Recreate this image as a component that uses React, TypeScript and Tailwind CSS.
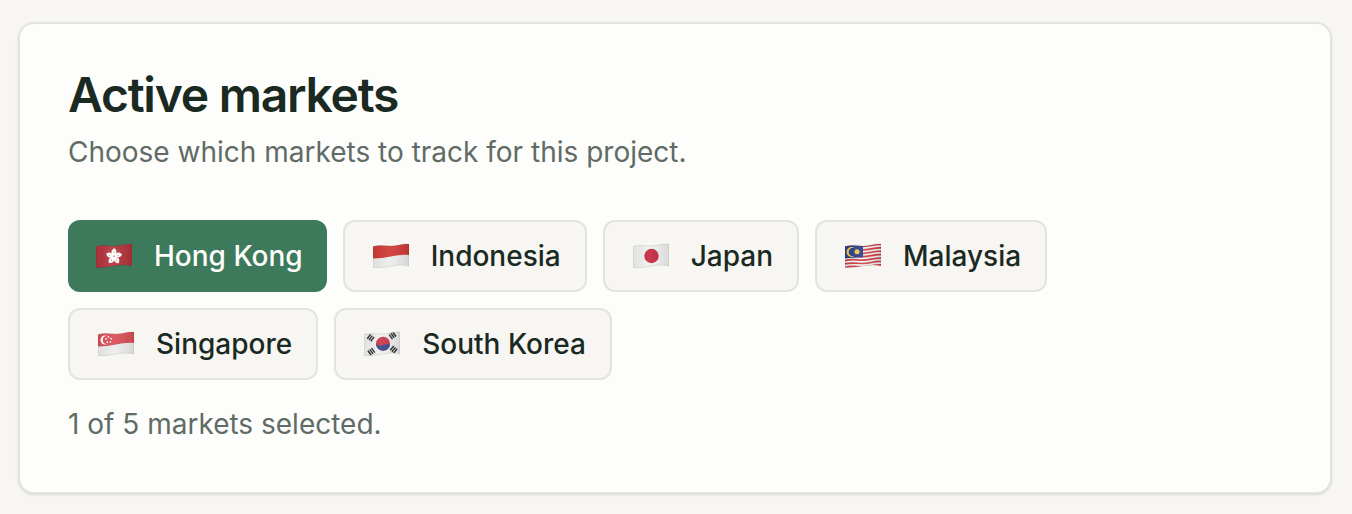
const WAVE = "M0 3.5C6 1.5 12 3 18 3C24 3 30 0.5 36 1V23C30 21.5 24 22 18 23C12 24 6 25 0 24.5Z";
const LOWER_BAND = "M0 0H36V12C30 11.5 24 12.5 18 13.5C12 14.5 6 15.5 0 15.5Z";

function FlagShell({ id, children }: { id: string; children: React.ReactNode }) {
  return (
    <svg width="36" height="26" viewBox="0 0 36 26" className="shrink-0">
      <defs>
        <clipPath id={id}>
          <path d={WAVE} />
        </clipPath>
        <linearGradient id={`${id}-shade`} x1="0" x2="1" y1="0" y2="0">
          <stop offset="0" stopColor="#000" stopOpacity="0.06" />
          <stop offset="0.45" stopColor="#fff" stopOpacity="0.08" />
          <stop offset="1" stopColor="#000" stopOpacity="0.1" />
        </linearGradient>
      </defs>
      <g clipPath={`url(#${id})`}>
        {children}
        <rect width="36" height="26" fill={`url(#${id}-shade)`} />
      </g>
      <path d={WAVE} fill="none" stroke="#000" strokeOpacity="0.16" strokeWidth="0.6" />
    </svg>
  );
}

function HongKongFlag() {
  return (
    <FlagShell id="hk">
      <rect width="36" height="26" fill="#b5333c" />
      <g transform="translate(18 13.5)">
        {[0, 72, 144, 216, 288].map((a) => (
          <g key={a} transform={`rotate(${a})`}>
            <path d="M0 -0.4C-3.6 -2.4 -3.4 -6.6 0.4 -8.2C3.4 -6 3 -2.6 0 -0.4Z" fill="#fff" />
            <circle cx="0" cy="-4.4" r="0.5" fill="#b5333c" />
          </g>
        ))}
      </g>
    </FlagShell>
  );
}

function IndonesiaFlag() {
  return (
    <FlagShell id="id">
      <rect width="36" height="26" fill="#eeeeee" />
      <path d={LOWER_BAND} fill="#cf3a34" />
    </FlagShell>
  );
}

function JapanFlag() {
  return (
    <FlagShell id="jp">
      <rect width="36" height="26" fill="#f1f1f1" />
      <circle cx="18.5" cy="13" r="7.2" fill="#c4283f" />
    </FlagShell>
  );
}

function MalaysiaFlag() {
  return (
    <FlagShell id="my">
      <rect width="36" height="26" fill="#f3f0f0" />
      {[0, 3.4, 6.8, 10.2, 13.6, 17, 20.4].map((y) => (
        <path key={y} d={`M0 ${y + 4}C6 ${y + 2} 12 ${y + 3.5} 18 ${y + 3.5}C24 ${y + 3.5} 30 ${y + 1} 36 ${y + 1.5}`} stroke="#cf3f45" strokeWidth="1.7" fill="none" />
      ))}
      <path d="M0 0H18V14.5C12 14.5 6 14.5 0 15.5Z" fill="#2a3f8f" />
      <circle cx="6.5" cy="9" r="5" fill="#f5cf3d" />
      <circle cx="8" cy="9" r="4.3" fill="#2a3f8f" />
      <circle cx="12" cy="8.8" r="2.5" fill="#f5cf3d" />
    </FlagShell>
  );
}

function SingaporeFlag() {
  return (
    <FlagShell id="sg">
      <rect width="36" height="26" fill="#eeeeee" />
      <path d={LOWER_BAND} fill="#dc4f57" />
      <circle cx="7" cy="9" r="4.5" fill="#fff" />
      <circle cx="8.8" cy="9" r="4" fill="#dc4f57" />
      {[[10.5, 5.8], [13.2, 7.6], [12.4, 10.8], [9.2, 11.2], [8, 8]].map(([x, y]) => (
        <circle key={x} cx={x} cy={y} r="0.9" fill="#fff" />
      ))}
    </FlagShell>
  );
}

function KoreaFlag() {
  return (
    <FlagShell id="kr">
      <rect width="36" height="26" fill="#f1f1f1" />
      <circle cx="19" cy="12.7" r="7" fill="#c9384a" />
      <path d="M12 12C13 15.5 16 15 19 14C22 13 25 13 26 13.5C25.8 17.2 22.6 19.7 19 19.7C15 19.7 11.7 16.2 12 12Z" fill="#33488f" />
      <g stroke="#333" strokeWidth="5.6" strokeDasharray="1.5 0.7">
        <path d="M4.2 5.2L9.4 8.8" />
        <path d="M31 2.8L25.8 6.6" />
        <path d="M5 22.4L10.2 18.6" />
        <path d="M32 20.4L26.8 16.2" />
      </g>
    </FlagShell>
  );
}

const markets = [
  { name: "Hong Kong", flag: <HongKongFlag />, active: true },
  { name: "Indonesia", flag: <IndonesiaFlag /> },
  { name: "Japan", flag: <JapanFlag /> },
  { name: "Malaysia", flag: <MalaysiaFlag /> },
  { name: "Singapore", flag: <SingaporeFlag /> },
  { name: "South Korea", flag: <KoreaFlag /> },
];

function MarketChip({ name, flag, active }: { name: string; flag: React.ReactNode; active?: boolean }) {
  return (
    <button
      className={
        active
          ? "flex h-[72px] items-center gap-[22px] rounded-xl bg-[#3d7a5c] pl-7 pr-6 text-[28px] font-medium text-[#fdfdfb]"
          : "flex h-[72px] items-center gap-[22px] rounded-xl border-2 border-[#e3e3df] bg-[#f7f6f3] pl-7 pr-6 text-[28px] font-medium text-[#1a2a22]"
      }
    >
      {flag}
      <span>{name}</span>
    </button>
  );
}

export default function App() {
  return (
    <div className="h-[514px] bg-[#f7f6f3] pl-[18px] pr-5 py-[22px] font-['Inter',sans-serif]">
      <div className="h-[472px] rounded-2xl border-2 border-[#e3e3df] bg-[#fdfdfb] p-12 shadow-sm">
        <h1 className="text-[48px] leading-[46px] font-semibold tracking-[-1.25px] text-[#1a2a22]">Active markets</h1>
        <p className="mt-[14px] text-[28px] leading-10 text-[#5f6b65]">Choose which markets to track for this project.</p>
        <div className="mt-12 flex flex-wrap gap-4">
          {markets.map((m) => (
            <MarketChip key={m.name} name={m.name} flag={m.flag} active={m.active} />
          ))}
        </div>
        <p className="mt-6 text-[28px] leading-10 text-[#5f6b65]">1 of 5 markets selected.</p>
      </div>
    </div>
  );
}
